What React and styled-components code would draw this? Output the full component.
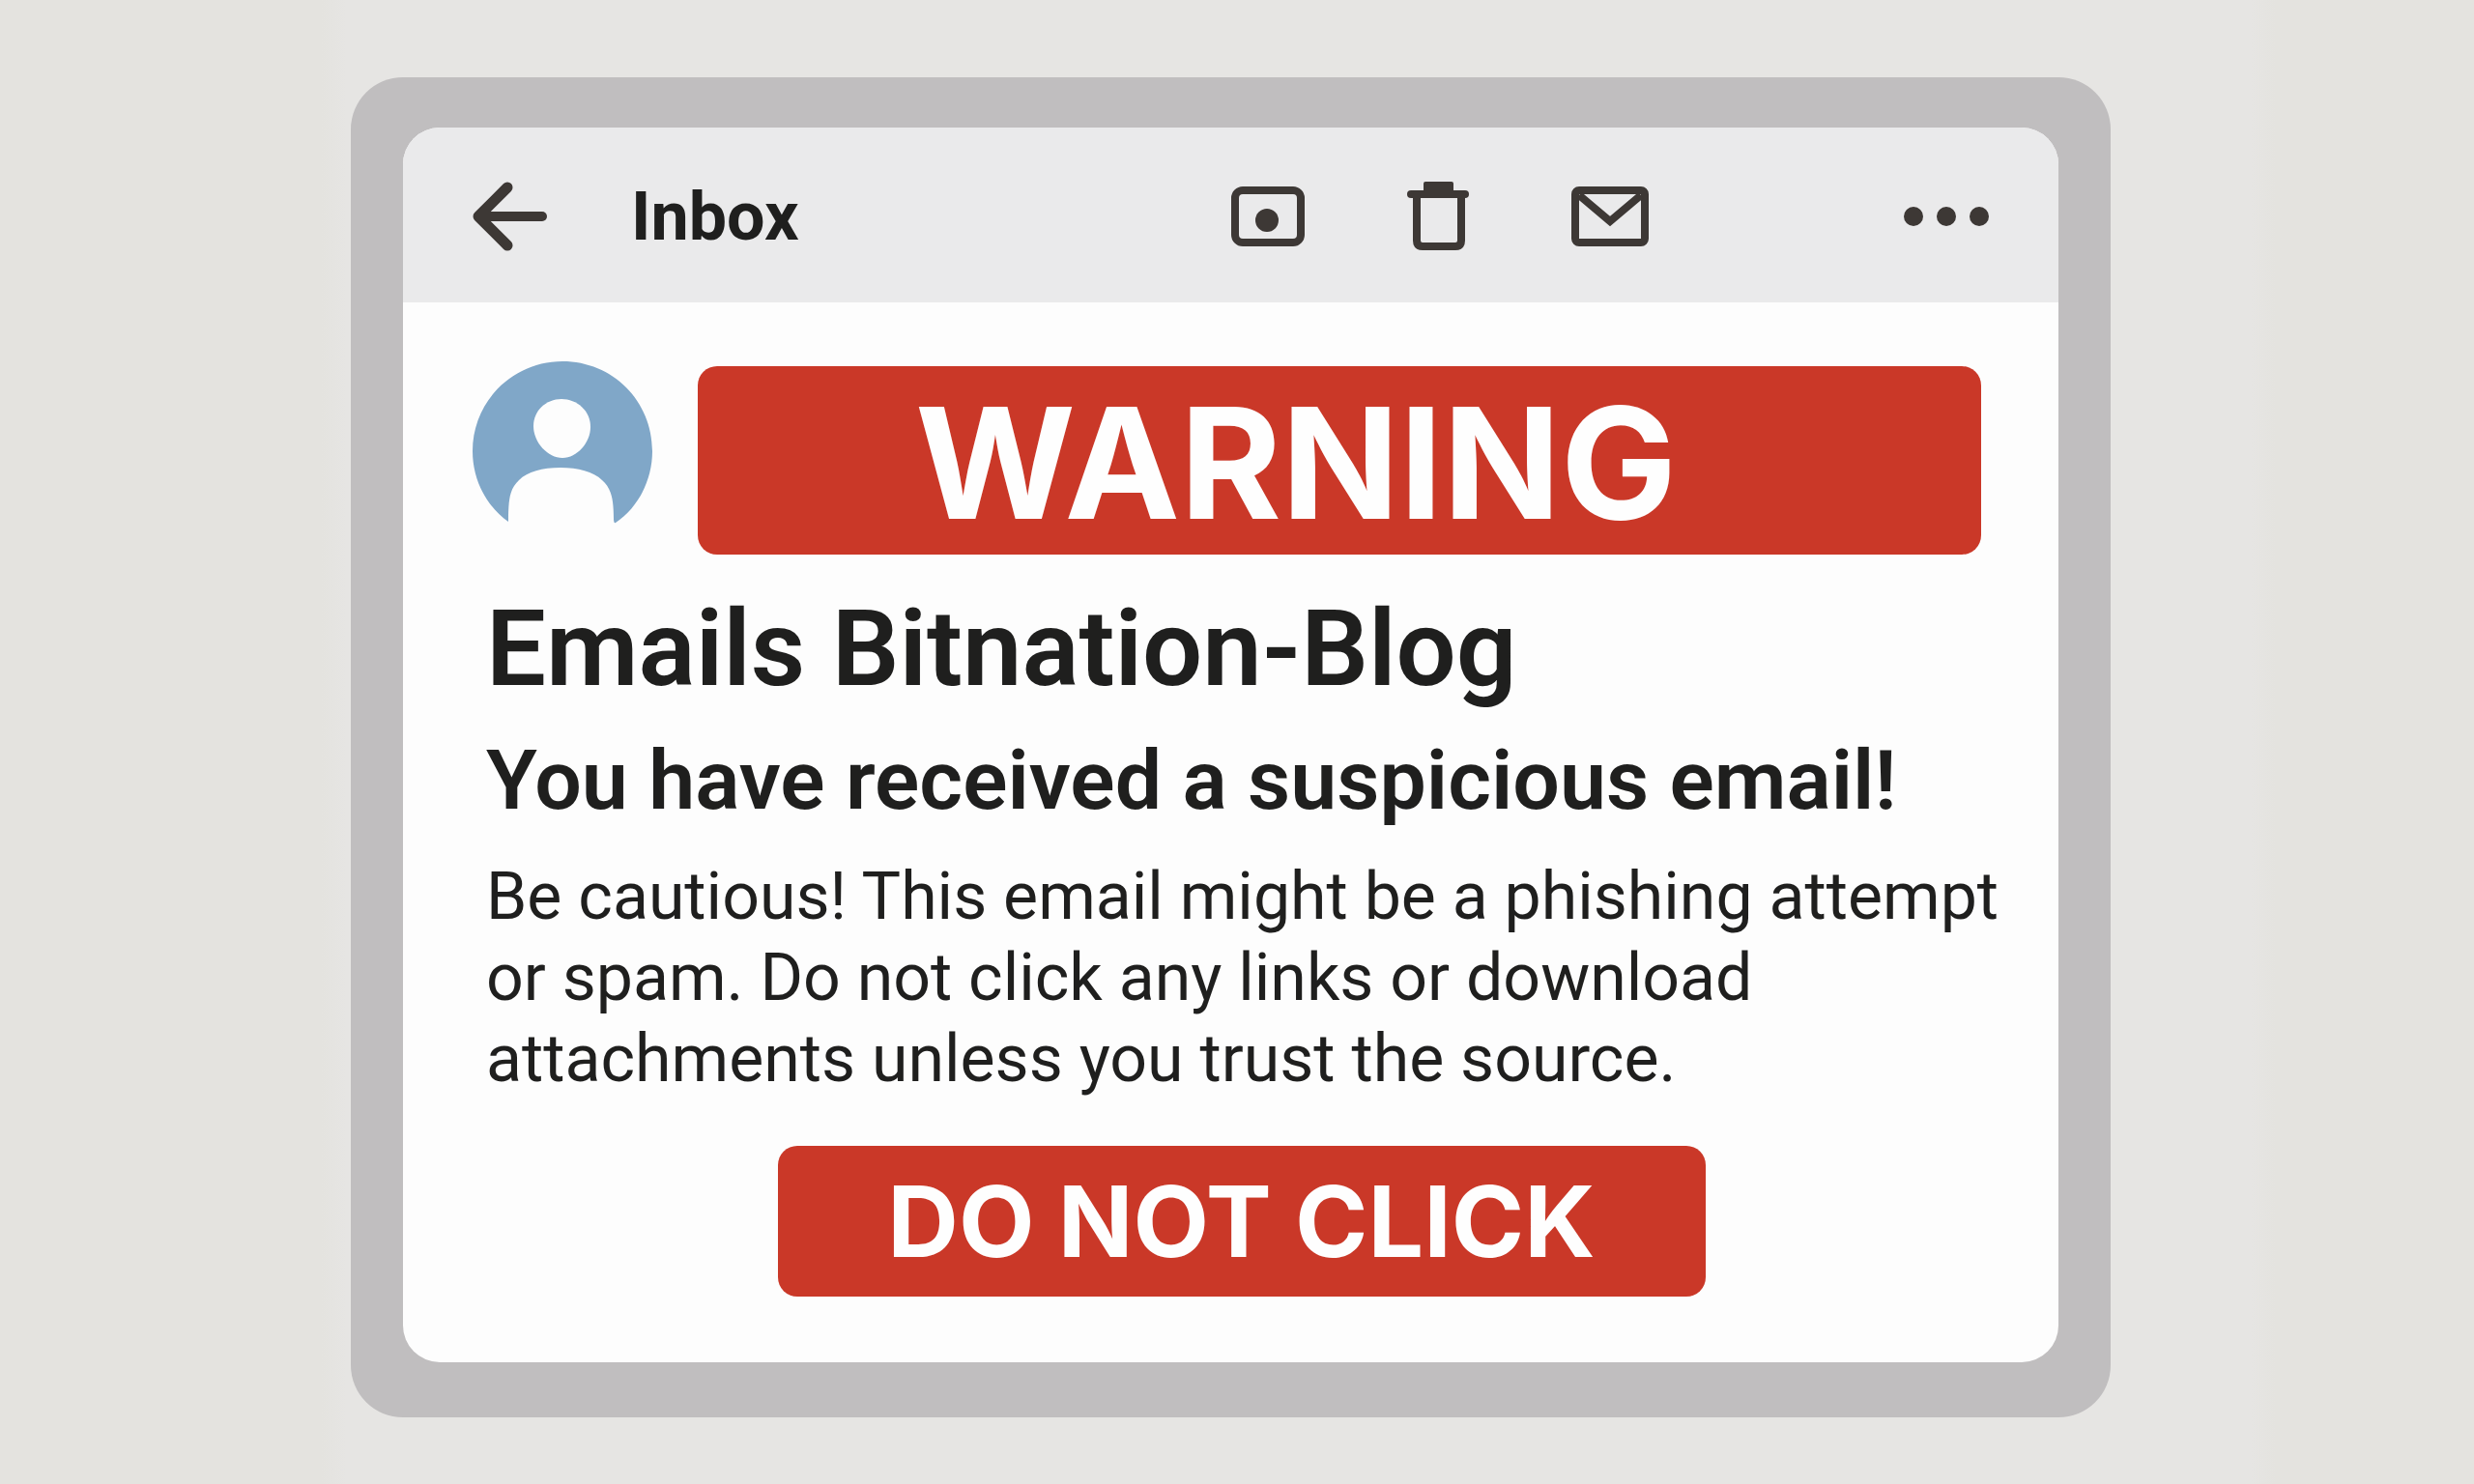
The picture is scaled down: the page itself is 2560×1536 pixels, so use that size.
import React from 'react';
import styled, { createGlobalStyle } from 'styled-components';

const GlobalStyle = createGlobalStyle`
  * {
    box-sizing: border-box;
  }

  body {
    margin: 0;
    background: #e4e3df;
    color: #1f1f1e;
    font-family: Roboto, 'Liberation Sans', sans-serif;
  }
`;

const Page = styled.div`
  min-height: 100vh;
  padding: 80px 376px 69px 363px;
  background: linear-gradient(90deg, #e4e3df 13%, #e6e5e3 14%, #e6e5e3 91%, #e4e3df 92%);
`;

const Frame = styled.div`
  padding: 52px 54px 57px;
  border-radius: 54px;
  background: #c0bebf;
`;

const Window = styled.main`
  overflow: hidden;
  border-radius: 38px;
  background: #fdfdfd;
`;

const Toolbar = styled.header`
  display: flex;
  align-items: center;
  height: 181px;
  padding: 2px 72px 0;
  background: #eaeaeb;
`;

const IconButton = styled.button`
  display: flex;
  padding: 0;
  border: 0;
  background: none;
  color: #3d3835;
  cursor: pointer;
`;

const FolderName = styled.h1`
  flex: 1;
  margin: 0 0 0 86px;
  font-size: 70px;
  line-height: 80px;
  font-weight: 700;
`;

const Actions = styled.div`
  display: flex;
  align-items: center;
  gap: 106px;
  margin-right: 264px;
`;

const Message = styled.article`
  padding: 61px 50px 68px 72px;
`;

const Sender = styled.div`
  display: flex;
  align-items: flex-start;
  gap: 46px;
  padding-right: 30px;
`;

const Banner = styled.div`
  display: flex;
  flex: 1;
  align-items: center;
  justify-content: center;
  height: 195px;
  margin-top: 5px;
  padding: 4px 90px 0 0;
  border-radius: 20px;
  background: #ca3828;
  color: #fefefe;
  font-family: Inter, sans-serif;
  font-size: 160px;
  font-weight: 700;
`;

const Content = styled.div`
  padding-left: 14px;
`;

const Title = styled.h2`
  margin: 36px 0 0;
  font-size: 110px;
  line-height: 124px;
  font-weight: 600;
`;

const Subtitle = styled.h3`
  margin: 24px 0 0;
  font-size: 86px;
  line-height: 100px;
  font-weight: 600;
`;

const Body = styled.p`
  margin: 28px 0 0;
  font-size: 68px;
  line-height: 84px;
`;

const DangerButton = styled.button`
  display: block;
  width: 960px;
  height: 156px;
  margin: 48px auto 0;
  padding: 0;
  border: 0;
  border-radius: 20px;
  background: #ca3828;
  color: #fefefe;
  font-family: Inter, sans-serif;
  font-size: 102px;
  font-weight: 700;
  cursor: pointer;
`;

const BackIcon = () => (
  <svg width="78" height="72" viewBox="0 0 78 72" fill="none" stroke="currentColor" strokeLinecap="round" strokeLinejoin="round">
    <path d="M36 6L6 36l30 30" strokeWidth="11" />
    <path d="M8 36h64" strokeWidth="10" />
  </svg>
);

const ArchiveIcon = () => (
  <svg width="76" height="62" viewBox="0 0 76 62" fill="none" stroke="currentColor" strokeWidth="8">
    <rect x="4" y="4" width="68" height="54" rx="8" />
    <circle cx="37" cy="35" r="12" fill="currentColor" stroke="none" />
  </svg>
);

const TrashIcon = () => (
  <svg width="64" height="72" viewBox="0 0 64 72" fill="none" stroke="currentColor" strokeWidth="8">
    <path d="M4 13h56" strokeLinecap="round" />
    <path d="M10 12v49q0 6 6 6h34q6 0 6-6V12" />
    <rect x="17" y="0" width="31" height="12" rx="2" fill="currentColor" stroke="none" />
  </svg>
);

const MailIcon = () => (
  <svg width="80" height="62" viewBox="0 0 80 62" fill="none" stroke="currentColor" strokeWidth="8">
    <rect x="4" y="4" width="72" height="54" rx="4" />
    <path d="M8 9l32 27L72 9" />
  </svg>
);

const MoreIcon = () => (
  <svg width="88" height="20" viewBox="0 0 88 20" fill="currentColor">
    <circle cx="10" cy="10" r="10" />
    <circle cx="44" cy="10" r="10" />
    <circle cx="78" cy="10" r="10" />
  </svg>
);

const Avatar = () => (
  <svg width="187" height="168" viewBox="0 0 187 168" role="img" aria-label="Sender">
    <path
      fill="#80a7c8"
      d="M37 166C14 150 0 122 0 93C0 41 42 0 93 0C145 0 186 41 186 93C186 122 172 151 148 167Q146 168 146 163C146 141 143 131 134 123C125 114 109 110 91 110C72 110 57 114 48 123C39 132 37 140 37 166Z"
    />
    <path fill="#fdfdfd" d="M92 39C108 39 122 51 122 68C122 84 108 100 93 100C78 100 63 84 63 67C63 51 76 39 92 39Z" />
  </svg>
);

const App = () => (
  <>
    <GlobalStyle />
    <Page>
      <Frame>
        <Window>
          <Toolbar>
            <IconButton type="button" aria-label="Back">
              <BackIcon />
            </IconButton>
            <FolderName>Inbox</FolderName>
            <Actions>
              <IconButton type="button" aria-label="Archive">
                <ArchiveIcon />
              </IconButton>
              <IconButton type="button" aria-label="Delete">
                <TrashIcon />
              </IconButton>
              <IconButton type="button" aria-label="Mark as unread">
                <MailIcon />
              </IconButton>
            </Actions>
            <IconButton type="button" aria-label="More">
              <MoreIcon />
            </IconButton>
          </Toolbar>
          <Message>
            <Sender>
              <Avatar />
              <Banner role="alert">WARNING</Banner>
            </Sender>
            <Content>
              <Title>Emails Bitnation-Blog</Title>
              <Subtitle>You have received a suspicious email!</Subtitle>
              <Body>
                Be cautious! This email might be a phishing attempt
                <br />
                or spam. Do not click any links or download
                <br />
                attachments unless you trust the source.
              </Body>
            </Content>
            <DangerButton type="button">DO NOT CLICK</DangerButton>
          </Message>
        </Window>
      </Frame>
    </Page>
  </>
);

export default App;
